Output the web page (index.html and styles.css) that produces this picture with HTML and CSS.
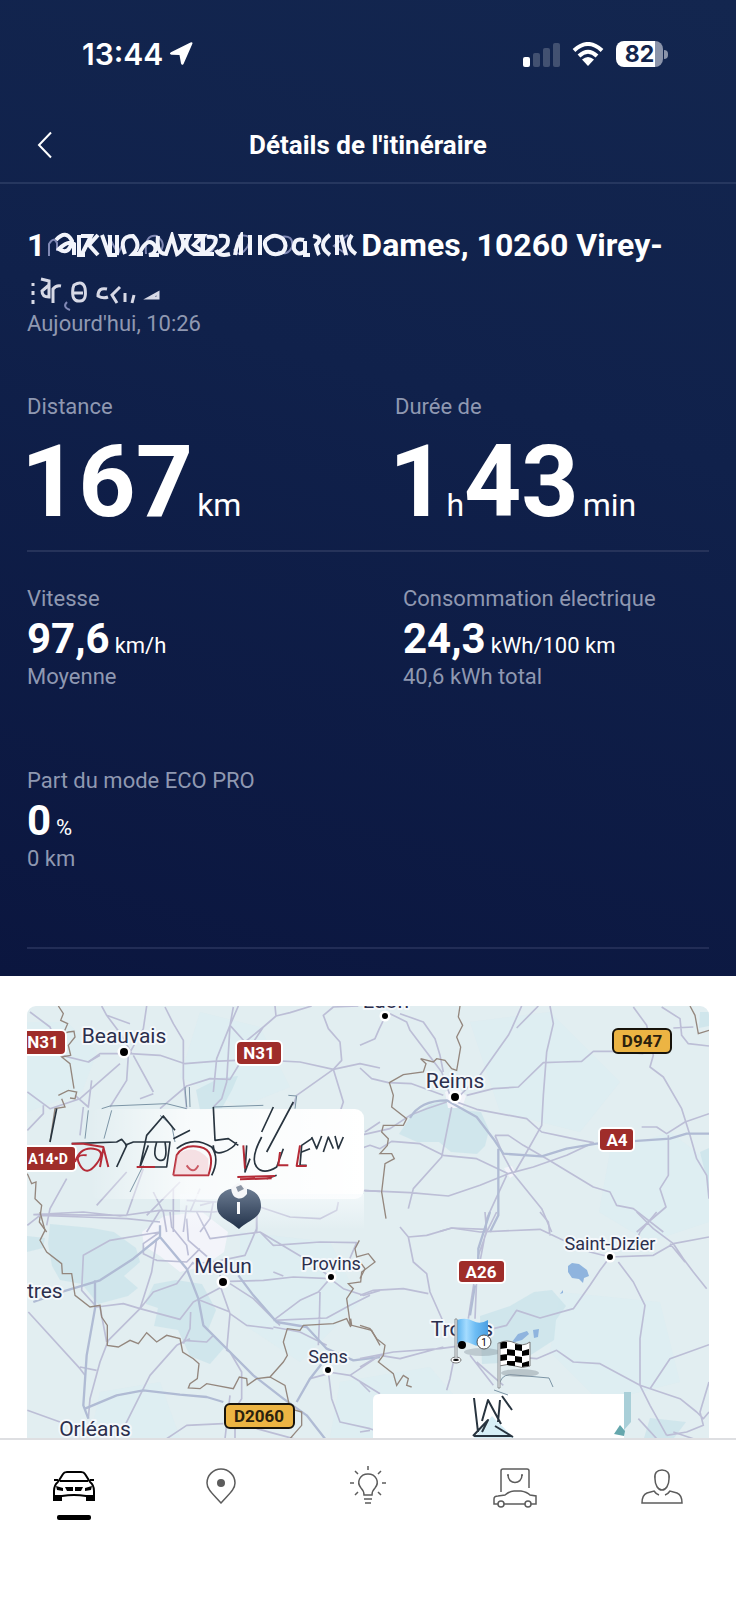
FILE: index.html
```html
<!DOCTYPE html>
<html lang="fr">
<head>
<meta charset="utf-8">
<meta name="viewport" content="width=device-width, initial-scale=1">
<title>Détails de l'itinéraire</title>
<link rel="stylesheet" href="styles.css">
</head>
<body>
<div class="panel">
  <div class="status">
    <div class="status-left">
      <span class="clock">13:44</span>
      <svg class="i-loc" viewBox="0 0 24 24"><path d="M23.500 1.500 14.500 22q-1.500 2-2.500-.6L10.500 13 2.500 12.800q-2.800-.8-.6-2.500L21.500.5q2-.8 2 1z"/></svg>
    </div>
    <div class="status-right">
      <svg class="i-signal" viewBox="0 0 37 25"><rect y="15" width="7" height="10" rx="2"/><g opacity=".2"><rect x="10" y="11" width="7" height="14" rx="2"/><rect x="20" y="6" width="7" height="19" rx="2"/><rect x="30" y="1" width="7" height="24" rx="2"/></g></svg>
      <svg class="i-wifi" viewBox="0 0 32 25"><path class="arc" d="M2 8.500Q16-4.500 30 8.500M7 14q9-8.500 18 0"/><path d="m16 24-6-6.500q6-5 12 0z"/></svg>
      <span class="battery"><span class="battery-body">82</span><span class="battery-tip"></span></span>
    </div>
  </div>
  <header class="bar">
    <button class="back" aria-label="Retour"><svg viewBox="0 0 16 28"><path d="M14 1.500 2 14l12 12.500"/></svg></button>
    <h1 class="title">Détails de l'itinéraire</h1>
  </header>
  <main class="trip">
    <h2 class="address">1<svg class="smudge" viewBox="0 0 310 26"><path class="faint" d="M1 24V12q5-8 8-1v8M60 3l10 19 8-18M98 22q-2-20 11-18 11 8 1 18M153 23V6q12-5 14 6-3 12-14 10M190 4q16-3 10 10-9 14-14 3M232 5q14-3 12 10-5 10-14 4M300 3l-14 11 14 9"/><path d="M8 8q10-11 16 1-3 15-13 8 9-9 15-5v11M31 3v20h6M33 4h10L34 22M50 3l-9 10 9 10M54 3l7 20 8 0M62 3v19M69 3v20M77 22q-7-18 8-18 9 9 0 18h10M91 22q9-19 16-8 2 7-6 9h10M110 4q-2 18 8 18l6-18 5 18q10-6 4-18h8q-7 12 5 18h12l-12-9 9-9h-9M155 4v19M159 5q13-2 7 8-7 8-12 9h12M171 4q12-2 8 9-9 10-11 5 3 7 14 4M187 23q2-12 6-19v19M202 3v20M212 3v20M218 8q8-8 17-1 5 7 0 13-9 5-15-1-5-7-2-11M256 8q-11-3-10 9 4 8 11 2V9v14h5M265 4q11 2 3 9 2 8 3 10M282 3q-14 10 0 20M289 3v20M293 3l5 20M304 3q-8 11 4 19"/></svg>Dames, 10260 Virey-<br><svg class="smudge smudge-short" viewBox="0 0 140 36"><path class="thin" d="M6 8v3m0 5v4m0 5v4M14 4l8 2v16q-7 0-7-6l7-6M26 28V14q3-4 8-3M47 10q9-5 11 3 2 13-5 13-9 1-7-13zm0 8h9M80 14q-9-2-9 7 5 3 10 1M93 12l-8 8 5 8M98 18v9M107 20l-2 8M122 23l9-5v5z"/><path class="faint" d="M40 27q-5 5 3 8"/></svg></h2>
    <p class="label">Aujourd'hui, 10:26</p>

    <div class="grid totals">
      <section><p class="label">Distance</p><p class="huge">167<span class="unit gap">km</span></p></section>
      <section><p class="label">Durée de</p><p class="huge">1<span class="unit">h</span>43<span class="unit gap">min</span></p></section>
    </div>

    <div class="grid details">
      <section><p class="label">Vitesse</p><p class="value">97,6<span class="unit">km/h</span></p><p class="label">Moyenne</p></section>
      <section class="shifted"><p class="label">Consommation électrique</p><p class="value">24,3<span class="unit">kWh/100 km</span></p><p class="label">40,6 kWh total</p></section>
      <section><p class="label">Part du mode ECO PRO</p><p class="value">0<span class="unit">%</span></p><p class="label">0 km</p></section>
    </div>
  </main>
</div>

<section class="map-wrap">
<svg class="map" viewBox="27 1004 682 432" role="img" aria-label="Carte du trajet">
  <defs>
    <linearGradient id="flag" x2="1"><stop stop-color="#5ab2ef"/><stop offset=".3" stop-color="#a5dcff"/><stop offset=".6" stop-color="#6cbcf4"/><stop offset="1" stop-color="#4b9fe2"/></linearGradient>
    <linearGradient id="pin" x2="0" y2="1"><stop stop-color="#6d7d93"/><stop offset="1" stop-color="#22324a"/></linearGradient>
    <linearGradient id="card"><stop stop-color="#fff" stop-opacity="0"/><stop offset=".35" stop-color="#fff" stop-opacity=".75"/><stop offset="1" stop-color="#fff"/></linearGradient>
    <linearGradient id="cardfade" x2="0" y2="1"><stop stop-color="#f8fbfd"/><stop offset="1" stop-color="#f8fbfd" stop-opacity="0"/></linearGradient>
  </defs>
  <rect class="land" x="27" y="1004" width="682" height="432"/>

  <!-- woods and urban areas -->
  <g class="tint">
    <path d="M27 1020h40l30 30-15 40-55 20zM200 1010l60 15 30 60-50 20-60-30zM470 1020l80-10 70 70-40 50-80-20zM610 1150l60-20 39 30v60l-60 20-50-30zM240 1230l90 10 30 60-60 60-60-40zM340 1380l90-15 60 71H330zM560 1290l100 10 20 80-80 20-50-50zM100 1390l60-10 20 56H90z"/>
  </g>
  <g class="wood">
    <path d="m399 1132 12-18 20-12 20-4 10 10 20 2 8 18-4 16-8 8-26-2-12-10-22 0zM196 1088l24-12 18-2-6 14-10 18-22 2zM27 1234l18 2-2 10-16 4zM50 1222l42 4 22 4 22 16 4 14-16 14 14 12-10 8-30 8-16-20-22-4-8-14-4-22zM146 1298l8-16 22-4 26 4 14 26-8 20 16 18-14 16-20-8-12-26-24-4 4-18-12-4zM480 1314l30-10 24-14 18-2 14 16-10 14-2 20-34 22-38 2zM650 1416l36 4-12 16h-30zM700 1010h9v14l-10 2zM700 1150l9-4v40z"/>
  </g>
  <g class="urban">
    <path d="M142 1230l22-16 38-4 26 20-4 20-20 14-24 6-20-16-16-10zM445 1090l12-6 9 10-4 12-14 0zM504 1166l8-2 4 8-6 4z"/>
  </g>
  <g class="lake">
    <path d="m568 1264 4-3 7 1 8 6 2 6-5 2-1 5-4-4-7-1-4-6zM512 1340l6-8 9-3 2 3-7 6-7 2zM533 1328l6-1-1 8-4 1zM560 1292l3-4 0 3z"/>
  </g>

  <!-- north-west -->
  <svg x="0" y="990" width="380" height="240" viewBox="0 0 1140 720" overflow="visible">
    <g class="road">
      <path d="M90 60 150 105 185 190 265 210 300 185 390 185 480 190 555 215 640 208 760 203 900 210 1000 232 1080 215 1140 228"/>
      <path d="M305 42 320 70 365 130 395 185M320 70 390 95M440 42 430 110 385 190 380 265 330 345M400 190 460 300M495 45 520 95 550 145 550 260 560 350M715 42 690 100 680 270 665 320 640 345M700 45 690 100 650 200 640 300"/>
      <path d="M825 42 828 72 790 105 740 180 690 262 630 260 560 282 480 350M828 72 870 62 935 42M690 100 735 150 790 105M1075 42 1000 45 970 70 985 110 1020 150 1025 205 1000 232 1030 330 1020 360M1000 232 890 310 880 340M1140 390 1095 420M460 305 420 320M265 210 300 190"/>
      <path d="M82 300 150 350 240 320 360 215M225 310 265 345 275 265M82 415 130 365 130 340M250 345 240 430M200 560 150 650 140 700M380 540 290 640M430 530 380 670 100 668M540 570 440 670M600 590 570 660M100 668 250 660 360 672 480 655 640 660 780 645 870 675 960 680 1010 655 1015 630M1140 598 1095 596"/>
      <path d="M460 600 490 660 500 720M520 590 520 720M480 655 440 720M560 640 550 720M600 640 640 630 630 680 600 720M770 640 770 720M650 630 560 625"/>
    </g>
    <path class="border" d="M175 42 190 65 182 85 203 95 190 125 205 120 222 118 225 135 205 160 212 190 185 195 210 215 222 290M175 310 205 295 230 300 225 320 210 318M185 320 195 345 165 350 150 450M82 545 95 575 108 570 105 620 125 640 118 690 140 720"/>
  </svg>

  <!-- north-east -->
  <svg x="360" y="990" width="376" height="240" viewBox="0 0 1128 720" overflow="visible">
    <g class="road">
      <path d="M75 75 58 110 45 140 0 160M90 65 140 90 150 115 245 240 270 310M120 65 190 90 225 140 240 190 250 240M485 42 455 110 445 130 360 250 300 310M535 42 470 108M570 42 580 95 560 180 550 310 545 400 500 480 465 540"/>
      <path d="M0 228 35 260 85 272 155 275 250 310M320 310 400 290 475 285 550 212 605 210 665 208 700 178 760 178 850 185M820 45 860 100 880 190 870 225 910 255 965 350 990 430 1010 500 1040 550 1047 620M905 45 960 80 965 130 985 155 1047 162M940 108 1000 105"/>
      <path d="M0 430 90 410 150 370 200 350 260 330M0 470 30 460 60 470 95 448 180 455 250 490 350 500 445 545 520 525 620 490 700 452 650 442 545 420 500 380 350 352 290 330M275 345 245 495 160 590 145 650M0 595 150 602 265 612 360 580 445 545M405 430 445 430 490 460 560 500 700 585 750 600 770 640 820 650 910 720M405 430 430 490 460 545 545 650 575 720M440 550 380 680 375 720"/>
      <path d="M845 405 890 405 920 425 975 390 1047 365M925 430 925 550 900 590 918 645 830 720M240 718 275 708 380 712"/>
    </g>
    <path class="highway" d="M150 378Q180 325 260 325L350 375 400 440 430 485 545 493 620 470 710 455 930 440 980 425 1047 425M415 470 415 670 390 720"/>
    <path class="border" d="M300 42 295 75 308 100 290 135 302 165 290 235 275 230 255 205 230 200 220 210 182 200 198 215 190 240 130 248 88 272 100 310 95 345 140 380 130 400 70 400 65 420 85 440 82 460 60 485 95 485 103 500 75 515 65 600 78 680M990 42 1005 70 1015 125 1047 115"/>
  </svg>

  <!-- south-west -->
  <svg x="0" y="1210" width="380" height="240" viewBox="0 0 1140 720" overflow="visible">
    <g class="road">
      <path d="M82 40 120 10 250 15 380 20 480 30M510 0 515 45 560 100 565 130M480 60 430 95 430 125 470 145 560 150 600 110M560 20 565 85 640 150 665 200M470 80 455 180 420 290 325 385 300 450 270 560 265 620M480 60 330 85 250 130 245 235 290 285 370 275 420 290 540 322 580 270 665 225M420 290 460 240 530 215 580 150"/>
      <path d="M590 0 630 80 780 60 820 100 960 90 1070 92 1045 150M770 0 770 50 735 130 640 150 575 155M780 60 940 155 990 195M690 208 790 205 880 195 990 200 1030 230 1090 250 1140 235M820 180 850 192M690 215 760 260 840 340M820 325 900 265 955 240 990 200M960 240 958 330 955 400M820 345 900 360 980 400M820 325 980 318 1050 280 1110 250"/>
      <path d="M85 300 240 470 255 490M300 285 320 390M240 465 290 475M570 380 530 400 450 490 385 620 370 650M550 385 620 390 640 370M572 300 570 350 550 395M660 220 690 305 680 415 690 420 725 480 725 560 705 590V680M690 305 740 340 820 350M82 595 180 630M500 680 560 640 670 635M770 650 880 680M985 480 995 560 1020 630 1110 650 1140 660M985 480 1050 490 1140 545M1050 490 1140 430M930 500 985 485M690 550 675 680M600 265 690 300"/>
    </g>
    <path class="highway" d="M480 40 480 75 560 170 595 260 610 340 690 420 760 490 850 560 920 610 975 680M480 75 400 140 300 205 190 238 100 270M285 205 285 290 260 430 250 580 265 620M255 590 350 550 430 535 540 548 620 555 670 570M715 190 760 250 830 330 920 345 980 410 1060 445 1140 435M985 430 930 500 890 570"/>
    <path class="border" d="M120 0 135 55 120 85 140 120 185 155 187 185 215 185 225 250 270 285 300 280 305 315 322 340 322 400 355 405 390 385 415 395 440 362 470 390 500 370 540 380 548 420 580 440 597 455 592 500 570 515 565 528 600 530 620 515 700 530 718 495 740 500 742 520 770 500 810 495 850 450 862 430 850 390 862 350 900 355 910 340 1000 335 1040 320 1052 345 1040 260 1060 230 1045 215 1082 210 1085 180 1125 150 1105 125 1070 135 1065 110 1078 85M1052 320 1055 340 1115 355 1140 400M810 495 855 520 870 590 905 600 905 640 870 680"/>
  </svg>

  <!-- south-east -->
  <svg x="360" y="1210" width="376" height="240" viewBox="0 0 1128 720" overflow="visible">
    <g class="road">
      <path d="M120 45 145 75 200 70 275 48 360 60 540 52 600 80 690 120 750 135 880 130 940 95 1047 75M375 0 380 60 355 130 325 320M145 75 160 150 200 185 210 240 250 330M0 250 40 235 130 230 205 245M410 0 375 70 350 200 345 320M540 0 565 30 570 70M830 0 880 50 940 95 970 140 1000 180 1040 230M890 0 840 60 820 110M930 95 975 150"/>
      <path d="M750 135 720 175 690 220 640 290 540 318 470 295 440 340 400 350M775 150 820 210 855 280 840 380 840 520 870 580 920 670M840 520 960 560 1010 600 1030 620 1047 600M870 530 930 440 1047 398M1047 510 1020 600 1030 640 980 660 920 670M0 440 100 420 240 410 310 400M0 465 60 430 120 440 250 405M330 430 400 520M350 450 430 520M420 430 530 440 590 415 640 450 720 455 840 520M280 450 270 500 260 535M0 510 30 540"/>
      <path d="M0 660 30 655M940 660 1000 680M835 620 890 680"/>
    </g>
    <path class="highway" d="M390 0 355 110 355 160M345 220 330 310"/>
    <path class="border" d="M0 200 15 170 0 150M0 340 30 350 50 380 75 400 70 430 55 450 100 485 110 520 130 490 145 500 140 520 155 525"/>
  </svg>

  <!-- information card over the capital -->
  <rect x="90" y="1107" width="274" height="90" rx="9" fill="url(#card)"/>
  <rect x="180" y="1192" width="184" height="36" fill="url(#cardfade)" opacity=".7"/>
  <g class="shield"><rect class="red" x="10" y="1145" width="65" height="23" rx="3"/></g>
  <svg x="0" y="990" width="380" height="240" viewBox="0 0 1140 720" overflow="visible">
    <path class="ink-light" d="M305 350 330 342 500 335 560 350M265 355 255 440M335 355 312 440M555 285 560 345M568 285 570 345M640 345 790 340M865 310 890 312 885 350M430 520 390 600M480 370 515 400 525 450"/>
    <path class="ink" d="M150 450 170 350M215 455 350 450 365 442 380 460 350 525M375 460 400 450 510 450 500 525 420 525 440 430 490 372 525 415M445 460 420 525M470 450Q455 500 480 505T495 450M520 440 570 415M640 345 645 445 685 440 715 460M640 460Q640 490 670 480T710 450M820 345 785 420M880 330 800 480M785 435Q750 500 770 525T830 525L850 470M740 460 735 540 750 500M935 440 905 460 900 520 920 520M905 480 930 470M935 435 950 470 965 432M970 480 985 435 1000 470M1005 432 1015 470 1030 435M830 550 800 560M530 470Q580 430 635 465 660 500 635 550"/>
    <path class="ink-red" d="M215 455 250 455 310 465 325 525M310 470 300 525M225 510Q240 465 280 470T290 515 240 520 260 490M410 525 465 525M520 550 530 490Q550 455 600 465T625 550L520 550M560 520Q580 550 595 520M730 460 735 530M712 555 825 552M720 562 815 559M840 480 835 520 865 520M900 460 890 522 920 522"/>
    <path d="M520 550 530 490Q580 450 625 500L625 550Z" fill="#f2aeb8" opacity=".35"/>
  </svg>
  <path d="M217 1204C217 1191 227 1186 239 1186S261 1191 261 1204C261 1216 249 1218 239 1227 229 1218 217 1216 217 1204z" fill="url(#pin)"/>
  <path d="m231 1186 7-5 9 5v6q-5 6-10 4-5-1-6-10z" fill="#f5f6f8"/><path d="m236 1185 5-2 3 4-6 3z" fill="#8b95a4"/><rect x="237" y="1200" width="3" height="12" fill="#f8f9fb"/>

  <!-- destination card -->
  <path d="M373 1436v-38q0-6 7-6h244v44z" fill="#fff"/>
  <path d="M624 1390h7v30l-7 8z" fill="#a9cfd8"/><path d="m614 1432 6-9 5 6-1 5z" fill="#65a7ad"/>
  <path d="M474 1436l18-22 22 22z" fill="#d7eff7"/>
  <path class="ink bold" d="m474 1396 4 34m4-11 6-21 13 24m-1-24-2 22m4-26 10 14M473 1434l15-16-6 12m13-6 18 11M474 1434h37"/>
  <path class="ink-light" d="M500 1380q3-9 15-7l34 3 4 9M494 1388l14 5"/>

  <!-- places -->
  <g class="dots">
    <circle cx="124" cy="1050" r="4"/><circle cx="385" cy="1014" r="3"/><circle cx="455" cy="1095" r="4"/><circle cx="223" cy="1280" r="4"/><circle cx="331" cy="1275" r="3"/><circle cx="328" cy="1368" r="3"/><circle cx="610" cy="1255" r="3"/>
  </g>
  <g class="place">
    <text x="124" y="1041">Beauvais</text><text x="386" y="1006">Laon</text><text x="455" y="1086">Reims</text><text x="223" y="1271">Melun</text><text x="41" y="1296">rtres</text><text x="95" y="1434">Orléans</text><text x="462" y="1334">Troyes</text>
  </g>
  <g class="place small">
    <text x="331" y="1268">Provins</text><text x="328" y="1361">Sens</text><text x="610" y="1248">Saint-Dizier</text>
  </g>
  <g class="shield">
    <rect class="red" x="10" y="1029" width="55" height="23" rx="4"/><text x="43" y="1046">N31</text>
    <rect class="red" x="237" y="1040" width="44" height="22" rx="4"/><text x="259" y="1057">N31</text>
    <rect class="red" x="600" y="1127" width="33" height="21" rx="3"/><text x="617" y="1144">A4</text>
    <rect class="red" x="459" y="1259" width="45" height="21" rx="3"/><text x="481" y="1276">A26</text>
    <text x="48" y="1162" class="tight">A14•D</text>
  </g>
  <g class="shield amber">
    <rect x="613" y="1027" width="58" height="24" rx="5"/><text x="642" y="1045">D947</text>
    <rect x="225" y="1402" width="69" height="24" rx="5"/><text x="259" y="1420">D2060</text>
  </g>

  <!-- start and finish flags -->
  <ellipse cx="482" cy="1350" rx="18" ry="4" fill="#7c8791" opacity=".35"/><ellipse cx="520" cy="1371" rx="19" ry="4" fill="#7c8791" opacity=".4"/>
  <path d="M457 1318q9-3 16 1t15-1v24q-9 4-16 0t-15 0z" fill="url(#flag)"/>
  <ellipse cx="456" cy="1358" rx="5" ry="3" fill="#fff" stroke="#777"/><path class="pole" d="M455 1317h2v41h-2z"/><ellipse cx="456" cy="1358" rx="3" ry="1"/>
  <circle cx="462" cy="1343" r="4"/><circle cx="484" cy="1340" r="7" fill="#fff" stroke="#555"/><text class="num" x="484" y="1344">1</text>
  <path d="M499 1341q8-4 16 0t15-1v24q-8 3-15 0t-16 0z" fill="#fff" stroke="#777"/>
  <path d="M500 1341q4-2 7-1v6l-7 1zM515 1342l7 1v6l-7-1zM507 1347l8 1v6l-8-1zM522 1349l7-2v6l-7 1zM500 1353l7-1v6l-7 1zM515 1354l7 1v6l-7-1zM507 1359l8 0v5l-8-1zM522 1361l7-2v5l-7 1z"/>
  <path class="pole" d="M498 1341h2v45h-2z"/>
</svg>
</section>

<nav class="tabs" aria-label="Navigation principale">
  <a class="tab active" href="#vehicule" aria-label="Véhicule" aria-current="page">
    <svg viewBox="0 0 48 48"><path d="M8 17l5-8q1-2 4-2h14q3 0 4 2l5 8M10 16h28M4 15h4M44 15h-4M8 17q-4 3-4 9v6M40 17q4 3 4 9v6M4 31h8q12-2 24 0h8"/><path class="fill" d="M3 31h9v5H3zM36 31h9v5h-9zM6 21l7 2v3l-6-1zM42 21l-7 2v3l6-1zM15 22h8v4h-6zM25 22h8l-2 4h-6z"/></svg>
  </a>
  <a class="tab" href="#carte" aria-label="Carte"><svg viewBox="0 0 48 48"><path d="M24 38C15 28 10 24 10 18a14 14 0 0 1 28 0c0 6-5 10-14 20z"/><circle class="fill" cx="24" cy="18" r="4"/></svg></a>
  <a class="tab" href="#conseils" aria-label="Conseils"><svg viewBox="0 0 48 48"><path d="M20 30q0-4-3-7c-5-6-1-14 7-14s12 8 7 14q-3 3-3 7zM20 34h8M21 38h6M24 1v4M6 18h4M38 18h4M11 6l3 3M37 6l-3 3M11 30l3-3M37 30l-3-3"/></svg></a>
  <a class="tab" href="#boutique" aria-label="Boutique"><svg viewBox="0 0 48 48"><path d="M10 27V6q0-2 2-2h24q2 0 2 2v17M17 10c0 10 14 10 14 0M7 39H3v-5q0-3 4-3l7-1q5-4 9-4h7q6 1 9 4l6 1v8h-5M13 39h21"/><circle cx="10" cy="39" r="3"/><circle cx="37" cy="39" r="3"/><circle class="fill" cx="17" cy="10" r="1"/><circle class="fill" cx="31" cy="10" r="1"/></svg></a>
  <a class="tab" href="#profil" aria-label="Profil"><svg viewBox="0 0 48 48"><path d="M24 5c5 0 8 3 7 9 0 6-3 11-7 11s-7-5-7-11c-1-6 2-9 7-9zM21 30q-3-1-5-4l-7 2q-5 2-5 10h40q0-8-5-10l-7-2q-2 3-5 4"/></svg></a>
</nav>
</body>
</html>
```
FILE: styles.css
```css
* { box-sizing: border-box; }
body {
  margin: 0;
  min-height: 100vh;
  display: flex;
  flex-direction: column;
  background: #fff;
  color: #fff;
  font-family: Roboto, "Noto Sans", sans-serif;
}
h1, h2, p { margin: 0; }

.panel {
  background: linear-gradient(195deg, #13264f 0%, #10214b 40%, #0b163f 100%);
}

/* status bar */
.status {
  height: 108px;
  padding: 0 68px 0 82px;
  display: flex;
  align-items: center;
  justify-content: space-between;
  font-family: Inter, sans-serif;
}
.status-left, .status-right { display: flex; align-items: center; }
.status-left { gap: 6px; }
.status-right { gap: 12px; }
.status svg { fill: #fff; display: block; }
.clock { font-size: 30px; font-weight: 600; line-height: 36px; }
.i-loc { width: 24px; height: 24px; }
.i-signal { width: 37px; height: 25px; }
.i-wifi { width: 32px; height: 25px; }
.i-wifi .arc { fill: none; stroke: #fff; stroke-width: 4; }
.battery { display: flex; align-items: center; gap: 1px; }
.battery-body {
  width: 47px;
  height: 26px;
  border-radius: 8px;
  background: linear-gradient(90deg, #fff 83%, #8b94aa 83%);
  color: #12244d;
  font-size: 23px;
  font-weight: 700;
  line-height: 26px;
  text-align: center;
}
.battery-tip { width: 4px; height: 9px; border-radius: 0 4px 4px 0; background: #8b94aa; }

/* title bar */
.bar {
  height: 76px;
  padding: 0 27px;
  display: grid;
  grid-template-columns: 36px 1fr 36px;
  align-items: center;
  border-bottom: 2px solid #26375f;
}
.back {
  height: 44px;
  padding: 0 0 0 10px;
  border: 0;
  background: none;
  display: flex;
  align-items: center;
}
.back svg { width: 16px; height: 28px; fill: none; stroke: #fff; stroke-width: 2; }
.title { text-align: center; font-size: 26px; font-weight: 700; line-height: 30px; }

/* trip summary */
.trip { padding: 40px 27px 27px; }
.address { font-size: 32px; font-weight: 700; line-height: 43px; }
.smudge { width: 316px; height: 26px; vertical-align: -2px; fill: none; stroke: #f2f4fb; stroke-width: 4; }
.smudge .faint { stroke: #8088b4; stroke-width: 2; }
.smudge .thin { stroke: #d7d9e6; stroke-width: 3; }
.smudge-short { width: 140px; height: 36px; vertical-align: -12px; }
.label { color: #8f98b1; font-size: 22px; line-height: 26px; }
.unit { font-weight: 400; line-height: 1; }

.grid { display: grid; grid-template-columns: 1fr 1fr; }
.totals { margin-top: 57px; padding-bottom: 18px; column-gap: 54px; border-bottom: 2px solid #26335a; }
.huge { margin: 12px 0 0 -6px; font-size: 100px; font-weight: 700; line-height: 100px; white-space: nowrap; }
.huge .unit { font-size: 32px; }
.huge .gap { margin-left: 4px; }

.details { padding: 34px 0 75px; row-gap: 78px; border-bottom: 2px solid #222d56; }
.shifted { padding-left: 35px; }
.value { margin-top: 2px; font-size: 42px; font-weight: 700; line-height: 50px; }
.value .unit { margin-left: 5px; font-size: 22px; }

/* map */
.map-wrap { padding: 30px 27px 0; flex: 1; }
.map { display: block; width: 100%; border-radius: 9px 9px 0 0; font-family: Roboto, "Noto Sans", sans-serif; }
.land { fill: #e2eef1; }
.tint { fill: #d9edf3; opacity: .5; }
.wood { fill: #c9e3e9; opacity: .7; }
.urban { fill: #f3f4fa; }
.lake { fill: #8fb4de; }
.road { fill: none; stroke: #bcbed6; stroke-width: 5; stroke-linejoin: round; }
.highway { fill: none; stroke: #b0bbd4; stroke-width: 7; stroke-linejoin: round; }
.border { fill: none; stroke: #94877e; stroke-width: 4; }
.ink, .ink-light, .ink-red { fill: none; stroke: #28343f; stroke-width: 5; stroke-linejoin: round; }
.ink.bold { stroke-width: 2; }
.ink-light { stroke: #7c95a6; stroke-width: 3; }
.map > .ink-light { stroke-width: 1; }
.ink-red { stroke: #b52b37; stroke-width: 6; }
.dots circle { stroke: #fff; stroke-width: 5; paint-order: stroke; }
.place { fill: #2c2f4d; font-size: 21px; text-anchor: middle; stroke: #f4f8fb; stroke-width: 4; stroke-linejoin: round; paint-order: stroke; }
.place.small { font-size: 18px; }
.shield { font-size: 17px; font-weight: 700; text-anchor: middle; }
.shield rect { stroke: #fff; stroke-width: 4; paint-order: stroke; fill: #9f2d2a; }
.shield text { fill: #fff; }
.shield.amber rect { fill: #ecb443; stroke: #17130b; stroke-width: 2; paint-order: normal; }
.shield.amber text { fill: #2b210d; }
.shield .tight { font-size: 14px; }
.pole { fill: #f4f6f7; stroke: #8a9094; stroke-width: 1; }
.num { font-size: 10px; text-anchor: middle; }

/* bottom tabs */
.tabs {
  height: 164px;
  padding-top: 25px;
  display: grid;
  grid-template-columns: repeat(5, 1fr);
  border-top: 2px solid #dedfe2;
  background: #fff;
}
.tab { display: flex; flex-direction: column; align-items: center; height: 60px; color: #5c5c5c; }
.tab svg { width: 48px; height: 48px; fill: none; stroke: currentColor; stroke-width: 1.5; }
.tab .fill { fill: currentColor; stroke: none; }
.tab.active { color: #000; }
.tab.active::after { content: ""; width: 34px; height: 5px; margin-top: 2px; border-radius: 2px; background: #000; }
.tab.active svg { stroke-width: 2; }
```
